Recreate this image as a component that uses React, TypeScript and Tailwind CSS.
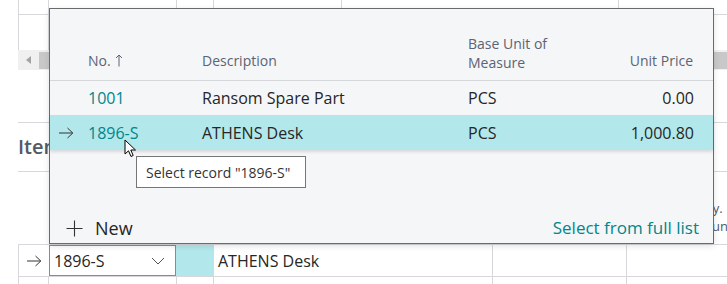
import React from "react";

const ArrowRight = ({ className = "" }: { className?: string }) => (
  <svg width="16" height="12" viewBox="0 0 16 12" className={className} fill="none" stroke="#333" strokeWidth="1">
    <path d="M1 6 H14.5" />
    <path d="M9.5 1 L14.8 6 L9.5 11" />
  </svg>
);

const Chevron = () => (
  <svg width="14" height="8" viewBox="0 0 14 8" fill="none" stroke="#555" strokeWidth="1">
    <path d="M1 1 L7 7 L13 1" />
  </svg>
);

const Plus = () => (
  <svg width="17" height="17" viewBox="0 0 17 17" fill="none" stroke="#333" strokeWidth="1.1">
    <path d="M8.5 0.5 V16.5 M0.5 8.5 H16.5" />
  </svg>
);

const UpArrow = () => (
  <svg width="8" height="13" viewBox="0 0 8 13" fill="none" stroke="#5a6474" strokeWidth="1">
    <path d="M4 1 V12.5" />
    <path d="M1 4 L4 1 L7 4" />
  </svg>
);

const Cursor = () => (
  <svg width="14" height="20" viewBox="0 0 14 20">
    <path d="M1 1 L1 15 L4.5 11.8 L7 17.5 L9.2 16.5 L6.8 11 L11.5 11 Z" fill="#fff" stroke="#000" strokeWidth="1" strokeLinejoin="round" />
  </svg>
);

export default function App() {
  const line = "border-[#d8d8dc]";
  return (
    <div className="relative w-[727px] h-[284px] overflow-hidden bg-white font-['Open_Sans',sans-serif] text-[#262626]">
      {/* Background page */}
      <div className="flex flex-col">
        {/* top table rows */}
        <div className={`ml-[18px] flex h-[15px] border-b ${line}`}>
          <div className={`w-[30px] border-l ${line}`} />
          <div className={`w-[128px] border-l ${line}`} />
          <div className={`w-[37px] border-l ${line}`} />
          <div className={`w-[128px] border-l ${line}`} />
          <div className={`w-[277px] border-l ${line}`} />
          <div className={`flex-1 border-l ${line}`} />
        </div>
        <div className={`ml-[18px] flex h-[35px]`}>
          <div className={`w-[30px] border-l ${line}`} />
          <div className={`w-[128px] border-l ${line}`} />
          <div className={`w-[37px] border-l ${line}`} />
          <div className={`w-[128px] border-l ${line}`} />
          <div className={`w-[277px] border-l ${line}`} />
          <div className={`flex-1 border-l ${line}`} />
        </div>
        {/* scrollbar */}
        <div className="ml-[18px] flex h-[20px] items-center bg-[#f0f0f0]">
          <div className="flex w-[21px] items-center justify-center">
            <div className="h-0 w-0 border-y-[4px] border-r-[5px] border-y-transparent border-r-[#a3a3a3]" />
          </div>
          <div className="h-[17px] flex-1 bg-[#c8c8c8]" />
        </div>
        <div className={`ml-[18px] h-[53px] border-b ${line}`} />
        {/* heading */}
        <div className={`ml-[18px] flex h-[49px] items-center border-b ${line}`}>
          <span className="text-[20px] font-semibold text-[#505a68]">Items</span>
        </div>
        {/* lower header */}
        <div className="relative h-[72px] text-[13px] leading-[18px] text-[#505a68]">
          <div className="ml-[698px] mt-[27px] whitespace-nowrap">Qty.</div>
          <div className="ml-[704px] whitespace-nowrap">Run</div>
        </div>
        {/* lower row */}
        <div className={`ml-[18px] flex h-[33px] border-y ${line}`}>
          <div className={`flex w-[31px] items-center justify-center border-l ${line}`}>
            <ArrowRight />
          </div>
          <div className="flex w-[127px] items-center justify-between border border-[#8a8a8a] bg-white pl-[4px] pr-[10px] text-[16px]">
            <span>1896-S</span>
            <Chevron />
          </div>
          <div className="w-[37px] bg-[#b2e8eb]" />
          <div className={`flex w-[279px] items-center border-l ${line} pl-[4px] text-[16px]`}>ATHENS Desk</div>
          <div className={`w-[134px] border-l ${line}`} />
          <div className={`flex-1 border-l ${line}`} />
        </div>
        <div className="ml-[18px] flex h-[10px]">
          <div className={`w-[30px] border-l ${line}`} />
          <div className={`w-[128px] border-l ${line}`} />
          <div className={`w-[37px] border-l ${line}`} />
          <div className={`w-[279px] border-l ${line}`} />
          <div className={`w-[134px] border-l ${line}`} />
          <div className={`flex-1 border-l ${line}`} />
        </div>
      </div>

      {/* Popup lookup */}
      <div className="absolute left-[49px] top-[8px] flex h-[236px] w-[665px] flex-col border border-[#6b6b6b] bg-[#f5f6f8] shadow-[0_2px_6px_rgba(0,0,0,0.12)]">
        <div className="flex h-[72px] items-end border-b border-[#d6d7da] pb-[10px] text-[14px] leading-[19px] text-[#5a6474]">
          <div className="w-[38px]" />
          <div className="flex w-[114px] items-center gap-[4px]">
            <span>No.</span>
            <UpArrow />
          </div>
          <div className="w-[266px]">Description</div>
          <div className="mb-[-2px] w-[132px]">
            <div>Base Unit of</div>
            <div>Measure</div>
          </div>
          <div className="flex-1 pr-[20px] text-right">Unit Price</div>
        </div>
        <div className="flex h-[34px] items-center text-[16px]">
          <div className="w-[38px]" />
          <div className="w-[114px] text-[#00868b]">1001</div>
          <div className="w-[266px]">Ransom Spare Part</div>
          <div className="w-[132px]">PCS</div>
          <div className="flex-1 pr-[19px] text-right">0.00</div>
        </div>
        <div className="flex h-[35px] items-center bg-[#b2e8eb] text-[16px] shadow-[0_2px_3px_rgba(0,0,0,0.12)]">
          <div className="flex w-[38px] items-center pl-[8px]">
            <ArrowRight />
          </div>
          <div className="w-[114px] text-[#00868b]">1896-S</div>
          <div className="w-[266px]">ATHENS Desk</div>
          <div className="w-[132px]">PCS</div>
          <div className="flex-1 pr-[19px] text-right">1,000.80</div>
        </div>
        <div className="flex-1" />
        <div className="flex h-[30px] items-center justify-between pl-[16px] pr-[14px] text-[18px]">
          <div className="flex items-center gap-[12px]">
            <Plus />
            <span>New</span>
          </div>
          <span className="text-[17px] text-[#00868b]">Select from full list</span>
        </div>
      </div>

      {/* Tooltip */}
      <div className="absolute left-[136px] top-[156px] flex h-[32px] w-[170px] items-center border border-[#767676] bg-white pl-[9px] text-[14px] text-[#333]">
        Select record "1896-S"
      </div>

      {/* Mouse cursor */}
      <div className="absolute left-[124px] top-[139px]">
        <Cursor />
      </div>
    </div>
  );
}
